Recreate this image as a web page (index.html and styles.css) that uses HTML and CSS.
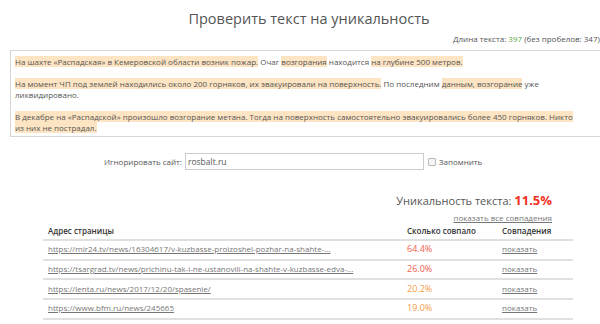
FILE: index.html
```html
<!DOCTYPE html>
<html lang="ru">
<head>
<meta charset="utf-8">
<title>Проверить текст на уникальность</title>
<link rel="stylesheet" href="styles.css">
</head>
<body>
<div class="page">
  <h1 class="title">Проверить текст на уникальность</h1>
  <div class="meta">Длина текста: <span class="green">397</span> (без пробелов: 347)</div>
  <div class="textbox">
    <p><span class="hl">На шахте «Распадская» в Кемеровской области возник пожар.</span> Очаг <span class="hl">возгорания</span> находится <span class="hl">на глубине 500 метров.</span></p>
    <p><span class="hl">На момент ЧП под землей находились около 200 горняков, их эвакуировали на поверхность.</span> По последним <span class="hl">данным, возгорание</span> <span>уже</span><br><span>ликвидировано.</span></p>
    <p><span class="hl">В декабре на «Распадской» произошло возгорание метана. Тогда на поверхность самостоятельно эвакуировались более 450 горняков. Никто</span><br><span class="hl">из них не пострадал.</span></p>
  </div>
  <div class="ignore">
    <label class="ignore-label" for="site">Игнорировать сайт:</label>
    <input class="ignore-input" id="site" type="text" value="rosbalt.ru">
    <label class="remember"><span class="check"></span>Запомнить</label>
  </div>
  <div class="result">
    <div class="uniq">Уникальность текста: <span class="uniq-val">11.5%</span></div>
    <a class="all" href="#">показать все совпадения</a>
  </div>
  <table class="matches">
    <thead>
      <tr><th class="c1">Адрес страницы</th><th class="c2">Сколько совпало</th><th class="c3">Совпадения</th></tr>
    </thead>
    <tbody>
      <tr><td><a href="#">https://mir24.tv/news/16304617/v-kuzbasse-proizoshel-pozhar-na-shahte-...</a></td><td class="red">64.4%</td><td><a href="#">показать</a></td></tr>
      <tr><td><a href="#">https://tsargrad.tv/news/prichinu-tak-i-ne-ustanovili-na-shahte-v-kuzbasse-edva-...</a></td><td class="red">26.0%</td><td><a href="#">показать</a></td></tr>
      <tr><td><a href="#">https://lenta.ru/news/2017/12/20/spasenie/</a></td><td class="orange">20.2%</td><td><a href="#">показать</a></td></tr>
      <tr><td><a href="#">https://www.bfm.ru/news/245665</a></td><td class="orange">19.0%</td><td><a href="#">показать</a></td></tr>
    </tbody>
  </table>
</div>
</body>
</html>
```

FILE: styles.css
```css
html, body {
  margin: 0;
  padding: 0;
  overflow: hidden;
  background: #fff;
}
body {
  font-family: "Open Sans", "Noto Sans", sans-serif;
  color: #555;
}
.page {
  width: 618px;
}
.title {
  margin: 0;
  padding-top: 9px;
  font-size: 14.5px;
  line-height: 20px;
  font-weight: 400;
  text-align: center;
  color: #555;
}
.meta {
  margin-top: 5px;
  padding-left: 453px;
  font-size: 8px;
  line-height: 10px;
  color: #555;
  white-space: nowrap;
}
.green { color: #5aa845; }
.textbox {
  margin: 6px 0 0 10px;
  width: 598px;
  box-sizing: border-box;
  border: 1px solid #d6d6d6;
  padding: 5px 20px 3px 4px;
  font-size: 8px;
  line-height: 11px;
  color: #555;
}
.textbox p {
  margin: 0 0 11px;
  white-space: nowrap;
}
.textbox p:last-child { margin-bottom: 0; }
.hl { background: #fde4c2; }
.ignore {
  margin-top: 16px;
  display: flex;
  align-items: center;
  padding-left: 104px;
  font-size: 8px;
  color: #555;
}
.ignore-label { margin-right: 3px; }
.ignore-input {
  width: 239px;
  height: 17px;
  box-sizing: border-box;
  border: 1px solid #ccc;
  padding: 0 2px;
  margin: 0;
  font-family: inherit;
  font-size: 8.5px;
  color: #555;
  outline: none;
}
.remember {
  display: flex;
  align-items: center;
  margin-left: 4px;
}
.check {
  width: 6px;
  height: 6px;
  border: 1px solid #bbb;
  border-radius: 1px;
  background: #f4f4f4;
  margin-right: 3px;
}
.result {
  margin-top: 23px;
  width: 552px;
  text-align: right;
}
.uniq {
  font-size: 11px;
  line-height: 14px;
  color: #555;
}
.uniq-val {
  color: #f2321f;
  font-weight: 700;
  font-size: 13px;
}
.all {
  display: block;
  margin-top: 5px;
  font-size: 8px;
  line-height: 10px;
  color: #777;
}
.matches {
  margin: -1px 0 0 43px;
  width: 530px;
  border-collapse: collapse;
  font-size: 8px;
}
.matches th {
  text-align: left;
  font-weight: 600;
  color: #333;
  font-size: 8px;
  line-height: 10px;
  padding: 4px 5px 3px;
  border-bottom: 2px solid #e0e0e0;
}
.matches td {
  padding: 3.35px 5px 4.35px;
  line-height: 10px;
  border-bottom: 2px solid #e0e0e0;
  white-space: nowrap;
}
.c1 { width: 349px; }
.c2 { width: 85px; }
.matches a { color: #777; }
.red { color: #f2604d; font-size: 9px; }
.orange { color: #f59a47; font-size: 9px; }
```
